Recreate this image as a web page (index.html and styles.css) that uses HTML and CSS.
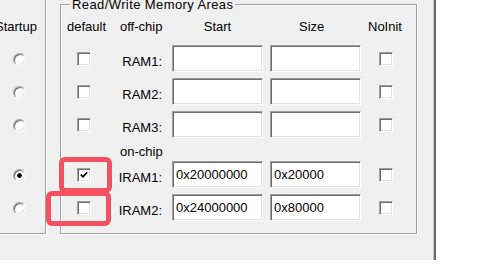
FILE: index.html
```html
<!DOCTYPE html>
<html lang="en">
<head>
<meta charset="utf-8">
<title>Read/Write Memory Areas</title>
<link rel="stylesheet" href="styles.css">
</head>
<body>
<div class="window">
  <div class="group startup">
    <div class="grid startup-grid">
      <div class="hdr startup-hdr">Startup</div>
      <span class="radio"></span>
      <span class="radio"></span>
      <span class="radio"></span>
      <span class="spacer"></span>
      <span class="radio checked"></span>
      <span class="radio"></span>
    </div>
  </div>

  <div class="group memory">
    <span class="legend">Read/Write Memory Areas</span>
    <div class="grid mem-grid">
      <div class="hdr hdr-default">default</div>
      <div class="hdr hdr-off">off-chip</div>
      <div class="hdr hdr-start">Start</div>
      <div class="hdr hdr-size">Size</div>
      <div class="hdr hdr-noinit">NoInit</div>

      <span class="check check-default"></span>
      <div class="lbl">RAM1:</div>
      <input class="field field-start" type="text" value="" readonly>
      <input class="field field-size" type="text" value="" readonly>
      <span class="check check-noinit"></span>

      <span class="check check-default"></span>
      <div class="lbl">RAM2:</div>
      <input class="field field-start" type="text" value="" readonly>
      <input class="field field-size" type="text" value="" readonly>
      <span class="check check-noinit"></span>

      <span class="check check-default"></span>
      <div class="lbl">RAM3:</div>
      <input class="field field-start" type="text" value="" readonly>
      <input class="field field-size" type="text" value="" readonly>
      <span class="check check-noinit"></span>

      <span class="spacer"></span>
      <div class="onchip">on-chip</div>

      <span class="check check-default is-checked"><svg viewBox="0 0 10 10" width="10" height="10"><polyline points="1.8,4.6 3.9,6.8 8.2,2.3" fill="none" stroke="#000" stroke-width="1.7"/></svg></span>
      <div class="lbl">IRAM1:</div>
      <input class="field field-start" type="text" value="0x20000000" readonly>
      <input class="field field-size" type="text" value="0x20000" readonly>
      <span class="check check-noinit"></span>

      <span class="check check-default"></span>
      <div class="lbl">IRAM2:</div>
      <input class="field field-start" type="text" value="0x24000000" readonly>
      <input class="field field-size" type="text" value="0x80000" readonly>
      <span class="check check-noinit"></span>
    </div>
  </div>

  <div class="mark mark-iram1"></div>
  <div class="mark mark-iram2"></div>
</div>
</body>
</html>
```

FILE: styles.css
```css
* { box-sizing: border-box; }

html, body {
  margin: 0;
  padding: 0;
  background: #ffffff;
}

body {
  font-family: "Liberation Sans", Arial, sans-serif;
  font-size: 13px;
  line-height: 15px;
  color: #000;
}

.window {
  position: relative;
  width: 436px;
  height: 260px;
  background: #f0f0f0;
  border-right: 2px solid #6b6b6b;
  box-shadow: inset -1px 0 0 #c8c8c8;
  display: flex;
  align-items: flex-start;
  overflow: hidden;
}

.group {
  border: 1px solid #a0a0a0;
  box-shadow: inset 1px 1px 0 #fff, 1px 1px 0 #fff;
  flex: none;
}

.startup {
  margin-left: -50px;
  margin-top: -20px;
  width: 96px;
  height: 254px;
  padding-top: 38px;
}

.memory {
  position: relative;
  margin-left: 14px;
  margin-top: 4px;
  width: 357px;
  height: 230px;
  padding-top: 14px;
}

.legend {
  position: absolute;
  left: 9px;
  top: -8px;
  padding: 0 2px;
  background: #f0f0f0;
  letter-spacing: 0.4px;
  white-space: nowrap;
}

.grid {
  display: grid;
  grid-template-rows: 20px 27px 27px 27px 11px 27px 27px;
  row-gap: 6px;
}

.startup-grid {
  grid-template-columns: 1fr;
}

.mem-grid {
  grid-template-columns: 51px 60px 91px 98px 55px;
}

.hdr {
  align-self: start;
  justify-self: start;
  white-space: nowrap;
}

.startup-hdr { margin-left: 44px; }
.hdr-default { margin-left: 6px; }
.hdr-off { margin-left: 8px; }
.hdr-start { justify-self: center; }
.hdr-size { margin-left: 36px; }
.hdr-noinit { margin-left: 7px; }

.radio {
  justify-self: start;
  align-self: center;
  margin-left: 62px;
  margin-top: 1px;
  width: 13px;
  height: 13px;
  border-radius: 50%;
  border: 1px solid;
  border-color: #a0a0a0 #ffffff #ffffff #a0a0a0;
  background: #fff;
  box-shadow: inset 1px 1px 0 #6d6d6d, inset -1px -1px 0 #e3e3e3;
}

.radio.checked {
  background: radial-gradient(circle, #000 0, #000 2px, #fff 2.6px);
}

.check {
  justify-self: start;
  align-self: start;
  margin-top: 7px;
  width: 14px;
  height: 14px;
  border: 1px solid;
  border-color: #a0a0a0 #ffffff #ffffff #a0a0a0;
  background: #fff;
  box-shadow: inset 1px 1px 0 #6d6d6d, inset -1px -1px 0 #e3e3e3;
  display: flex;
  align-items: center;
  justify-content: center;
}

.check svg { display: block; }

.check-default { margin-left: 16px; }
.check-noinit { margin-left: 18px; }

.lbl {
  justify-self: end;
  align-self: start;
  margin-top: 9px;
  margin-right: 10px;
  white-space: nowrap;
}

.onchip {
  grid-column: 2 / -1;
  align-self: start;
  margin-left: 8px;
  white-space: nowrap;
}

.field {
  width: 91px;
  height: 27px;
  margin: 0;
  padding: 0 3px;
  font: inherit;
  color: #000;
  background: #fff;
  border: 1px solid;
  border-color: #a0a0a0 #ffffff #ffffff #a0a0a0;
  box-shadow: inset 1px 1px 0 #6d6d6d, inset -1px -1px 0 #e3e3e3;
  outline: none;
}

.field-size { margin-left: 7px; }

.mark {
  position: absolute;
  border: 5px solid #f5505f;
  border-radius: 6px;
}

.mark-iram1 {
  left: 59px;
  top: 157px;
  width: 53px;
  height: 36px;
}

.mark-iram2 {
  left: 46px;
  top: 191px;
  width: 65px;
  height: 35px;
}
```
